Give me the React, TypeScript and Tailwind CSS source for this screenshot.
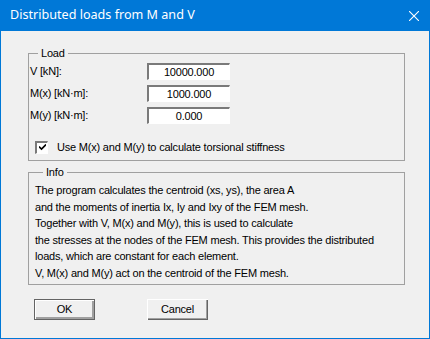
const sunken =
  'border-t-2 border-l-2 border-r border-b border-t-[#7a7a7a] border-l-[#7a7a7a] border-r-white border-b-white bg-white';

function Field({ label, value }: { label: string; value: string }) {
  return (
    <div className="flex items-center h-[17px]">
      <span className="w-[117px]">{label}</span>
      <div className={`w-[83px] h-[17px] flex items-center justify-center leading-none ${sunken}`}>
        {value}
      </div>
    </div>
  );
}

function Button({ label, primary }: { label: string; primary?: boolean }) {
  return (
    <button
      className={`w-[61px] h-[21px] flex items-center justify-center bg-[#f0f0f0] ${
        primary
          ? 'border border-[#646464] shadow-[inset_1px_1px_0_#fff,inset_-2px_-2px_0_#a0a0a0]'
          : 'shadow-[inset_1px_1px_0_#fff,inset_-1px_-1px_0_#646464,inset_-2px_-2px_0_#a0a0a0]'
      }`}
    >
      {label}
    </button>
  );
}

export default function App() {
  return (
    <div className="w-[430px] h-[339px] bg-[#0078d7] px-px pb-px flex flex-col text-[11px] tracking-[-0.2px] text-black font-['Liberation_Sans',sans-serif]">
      {/* Title bar */}
      <div className="h-[31px] flex items-center justify-between pl-[9px] pr-[10px] text-white">
        <span className="text-[12.6px] tracking-normal font-['Noto_Sans',sans-serif]">
          Distributed loads from M and V
        </span>
        <svg width="10" height="10" viewBox="0 0 10 10">
          <path d="M0 0 L10 10 M10 0 L0 10" stroke="#fff" strokeWidth="1.1" />
        </svg>
      </div>

      <div className="flex-1 bg-[#f0f0f0] flex flex-col pl-[27px] pt-[16px]">
        {/* Load group */}
        <fieldset className="w-[377px] h-[114px] border border-[#a0a0a0] pl-[1px]">
          <legend className="ml-[8px] px-[3px] leading-[13px]">Load</legend>
          <div className="flex flex-col gap-[5px] mt-[3px]">
            <Field label="V [kN]:" value="10000.000" />
            <Field label="M(x) [kN·m]:" value="1000.000" />
            <Field label="M(y) [kN·m]:" value="0.000" />
          </div>
          <div className="flex items-center mt-[15px] ml-[5px] gap-[9px]">
            <div className={`w-[13px] h-[13px] flex items-center justify-center ${sunken}`}>
              <svg width="7" height="7" viewBox="0 0 7 7">
                <path d="M0 2.5 L2.5 5 L7 0.5" stroke="#000" strokeWidth="1.6" fill="none" />
              </svg>
            </div>
            <span>Use M(x) and M(y) to calculate torsional stiffness</span>
          </div>
        </fieldset>

        {/* Info group */}
        <fieldset className="w-[377px] h-[119px] border border-[#a0a0a0] mt-[5px] pl-[6px]">
          <legend className="ml-[8px] px-[3px] leading-[13px]">Info</legend>
          <div className="leading-[16.5px] mt-[3px]">
            <p>The program calculates the centroid (xs, ys), the area A</p>
            <p>and the moments of inertia Ix, Iy and Ixy of the FEM mesh.</p>
            <p>Together with V, M(x) and M(y), this is used to calculate</p>
            <p>the stresses at the nodes of the FEM mesh. This provides the distributed</p>
            <p>loads, which are constant for each element.</p>
            <p>V, M(x) and M(y) act on the centroid of the FEM mesh.</p>
          </div>
        </fieldset>

        {/* Buttons */}
        <div className="flex gap-[52px] mt-[14px] ml-[6px]">
          <Button label="OK" primary />
          <Button label="Cancel" />
        </div>
      </div>
    </div>
  );
}
